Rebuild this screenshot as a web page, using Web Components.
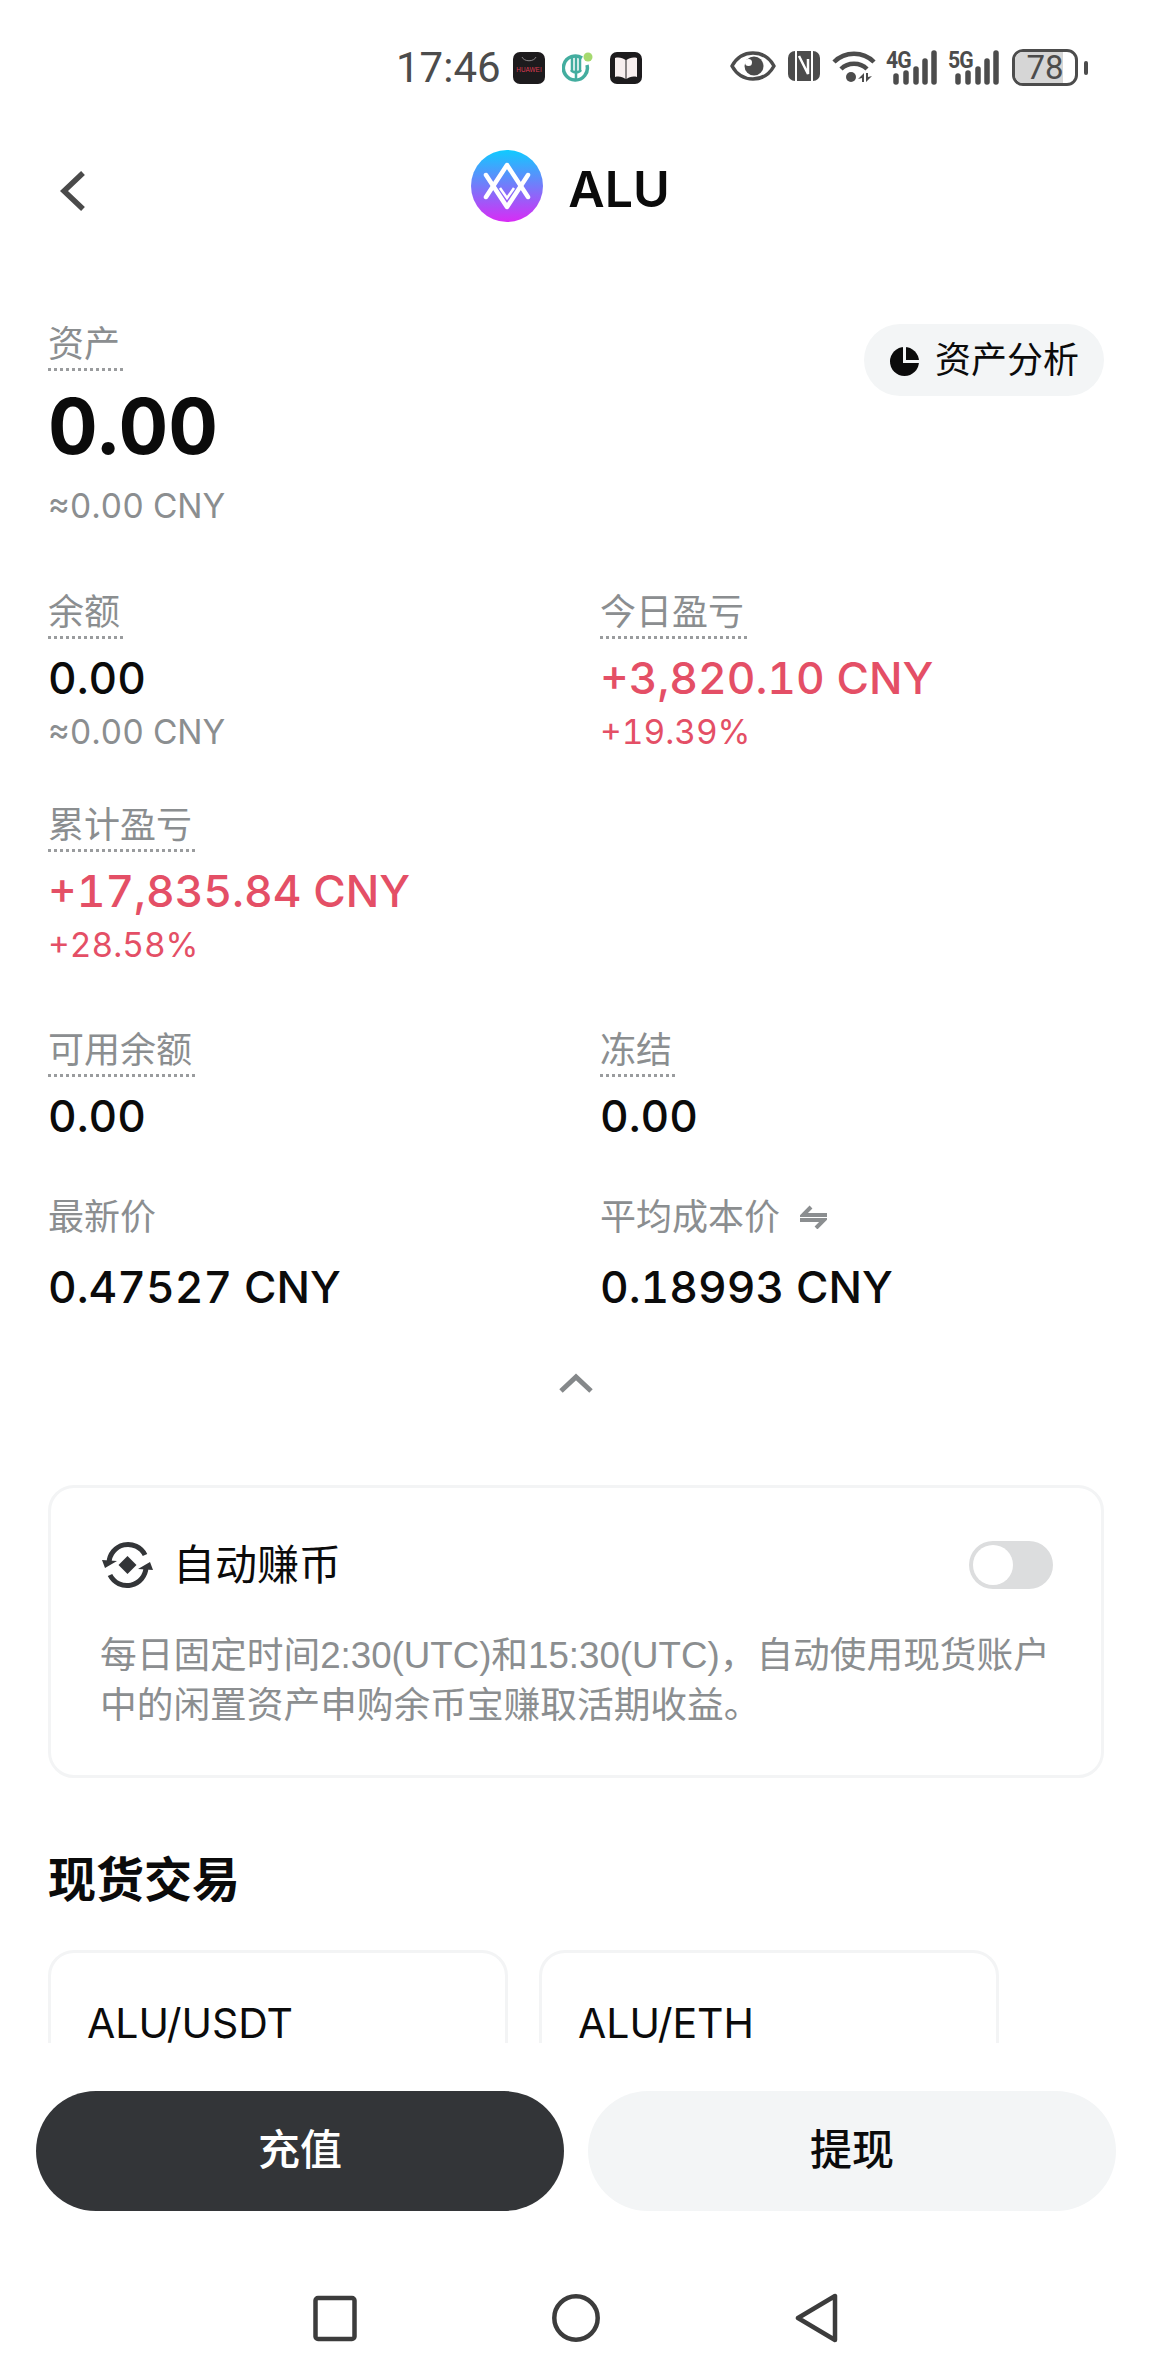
<!DOCTYPE html>
<html lang="zh-CN">
<head>
<meta charset="UTF-8">
<title>ALU</title>
<style>
    html, body { margin: 0; padding: 0; background: #fff; }
    body { width: 1152px; height: 2376px; overflow: hidden; font-family: Inter, "Noto Sans CJK SC", sans-serif; color: #0b0b0b; }
</style>
</head>
<body>

<template id="status-tpl">
    <style>
        :host { display: flex; justify-content: space-between; align-items: flex-start; height: 130px; box-sizing: border-box; padding: 49px 64px 0 396px; color: #4c4c4c; }
        .left, .right { display: flex; align-items: center; height: 37px; }
        .time { font: 400 42px/37px Roboto, sans-serif; width: 117px; }
        svg { display: block; flex: none; }
        .left svg + svg { margin-left: 17px; }
        .right > * + * { margin-left: 12px; }
        .net { position: relative; width: 50px; height: 37px; }
        .net b { position: absolute; left: -2px; top: 2px; font: 700 23px/20px Roboto, sans-serif; letter-spacing: -1px; transform: scaleX(.92); transform-origin: 0 0; }
        .net svg { position: absolute; left: 0; top: 0; }
        .batt { position: relative; display: flex; align-items: center; justify-content: center; width: 66px; height: 37px; box-sizing: border-box; border: 3px solid #4c4c4c; border-radius: 11px; font: 400 33px/31px Roboto, sans-serif; }
        .batt i { position: absolute; left: 0; top: 0; bottom: 0; width: 48px; border-radius: 8px 0 0 8px; background: #d6d6d6; }
        .batt span { position: relative; }
        .tip { width: 4px; height: 14px; border-radius: 2px; background: #4c4c4c; margin-left: 6px !important; }
    </style>
    <div class="left">
        <div class="time">17:46</div>
        <svg width="32" height="32" viewBox="0 0 32 32" style="margin-left:0">
            <rect width="32" height="32" rx="7" fill="#1d1b1d"/>
            <path d="M9 5c2 5 12 5 14 0" fill="none" stroke="#8b8688" stroke-width="1"/>
            <text x="16" y="20" text-anchor="middle" font-family="Liberation Sans" font-size="6.4" fill="#d93a50">HUAWEI</text>
        </svg>
        <svg width="31" height="31" viewBox="0 0 31 31">
            <path d="M20 6A12 12 0 1 0 25 13" fill="none" stroke="#43ad9f" stroke-width="3.5"/>
            <path d="M10 6v12M14 4v24M18 6v12M9 18c2 3 8 3 10 0" fill="none" stroke="#43ad9f" stroke-width="2.5"/>
            <circle cx="26" cy="5" r="4.5" fill="#a5d96f"/>
        </svg>
        <svg width="32" height="32" viewBox="0 0 32 32">
            <rect width="32" height="32" rx="7" fill="#1d1b1d"/>
            <path d="M5 6c4-1 8 0 10.500 2v19C13 25 9 24 5 25zM27 6c-4-1-8 0-10.500 2v19c2.500-2 6.500-3 10.500-2z" fill="#f7eeee"/>
        </svg>
    </div>
    <div class="right">
        <svg width="46" height="30" viewBox="0 0 46 30" style="margin-top:-3px">
            <path d="M2 15C7 6 14 2 23 2s16 4 21 13c-5 9-12 13-21 13S7 24 2 15z" fill="none" stroke="#4c4c4c" stroke-width="3.500" stroke-linejoin="round"/>
            <circle cx="24" cy="15" r="9.500" fill="#4c4c4c"/>
            <circle cx="18.500" cy="11.500" r="3.500" fill="#fff"/>
        </svg>
        <svg width="32" height="30" viewBox="0 0 32 30" style="margin-top:-3px">
            <rect width="32" height="30" rx="7" fill="#4c4c4c"/>
            <path d="M7 0h2v30H7zM23 0h2v30h-2z" fill="#fff"/>
            <path d="M11 5l9 18V8" fill="none" stroke="#fff" stroke-width="2.500"/>
        </svg>
        <svg width="44" height="32" viewBox="0 0 44 32" style="margin-top:-2px">
            <path d="M2 11C13 0 31 0 42 11" fill="none" stroke="#4c4c4c" stroke-width="4.500"/>
            <path d="M9 18C16 11 28 11 35 18" fill="none" stroke="#4c4c4c" stroke-width="4.500"/>
            <circle cx="19" cy="26" r="5" fill="#4c4c4c"/>
            <path d="M32 22v9h-2v-4l-4 1zM34 31v-9h2v4l4 -1z" fill="#4c4c4c"/>
        </svg>
        <div class="net"><b>4G</b><svg width="50" height="37" viewBox="0 0 50 37"><g stroke="#4c4c4c" stroke-width="5.500" stroke-linecap="round"><path d="M8 27v6M18 24v9M28 20v13M37 12v21M46 4v29"/></g></svg></div>
        <div class="net"><b>5G</b><svg width="50" height="37" viewBox="0 0 50 37"><g stroke="#4c4c4c" stroke-width="5.500" stroke-linecap="round"><path d="M8 27v6M18 24v9M28 20v13M37 12v21M46 4v29"/></g></svg></div>
        <div class="batt"><i></i><span>78</span></div>
        <div class="tip"></div>
    </div>
</template>

<template id="head-tpl">
    <style>
        :host { display: grid; grid-template-columns: 1fr auto 1fr; align-items: center; height: 112px; padding: 0 71px 0 60px; }
        svg { display: block; }
        .back { margin-top: 10px; }
        .title { display: flex; align-items: center; gap: 25px; font: 600 50px/60px Inter, sans-serif; color: #0b0b0b; }
        .title span { padding-top: 5px; }
    </style>
    <svg class="back" width="26" height="42" viewBox="0 0 26 42"><path d="M23 3L4 21l19 18" fill="none" stroke="#4a4a4a" stroke-width="5.500"/></svg>
    <div class="title">
        <svg width="72" height="72" viewBox="0 0 72 72">
            <defs><linearGradient id="alu" x1="0" y1="0" x2="0" y2="1"><stop offset="0" stop-color="#0fcbff"/><stop offset="1" stop-color="#d92bf5"/></linearGradient></defs>
            <circle cx="36" cy="36" r="36" fill="url(#alu)"/>
            <g fill="none" stroke="#fff" stroke-width="4.500" stroke-linecap="round" stroke-linejoin="round">
                <path d="M15 47L36 15l21 32"/>
                <path d="M15 25l21 32 21-32"/>
            </g>
            <path d="M29 38l7 10 7-10" fill="none" stroke="#fff" stroke-width="2.500"/>
        </svg>
        <span><slot></slot></span>
    </div>
    <span></span>
</template>

<template id="pill-tpl">
    <style>
        :host { display: inline-flex; align-items: center; gap: 16px; height: 72px; padding: 0 25px 6px 26px; border-radius: 36px; background: #f3f5f6; font-size: 36px; color: #0b0b0b; box-sizing: border-box; }
        svg { display: block; margin-top: 9px; }
    </style>
    <svg width="29" height="29" viewBox="0 0 29 29">
        <circle cx="14.500" cy="14.500" r="14.500" fill="#0b0b0b"/>
        <path d="M14.500 0v14.500H29" fill="none" stroke="#f3f5f6" stroke-width="3"/>
    </svg>
    <slot></slot>
</template>

<template id="stat-tpl">
    <style>
        :host { display: block; color: #8b8e90; }
        .label { display: block; height: 48px; font-size: 36px; line-height: 44px; white-space: nowrap; }
        .label span { display: inline-flex; align-items: center; gap: 20px; height: 51px; padding: 0 3px 4px 0; box-sizing: border-box; }
        :host([dotted]) .label span { background: repeating-linear-gradient(90deg, #9a9c9e 0 3px, transparent 3px 6px) left bottom / 100% 3px no-repeat; }
        .value { display: block; margin-top: 15px; font-size: 44.3px; font-weight: 500; line-height: 54px; color: #0b0b0b; white-space: nowrap; font-variant-numeric: tabular-nums; }
        .sub { display: block; margin-top: 5px; font-size: 33.5px; line-height: 44px; white-space: nowrap; font-variant-numeric: tabular-nums; }
        :host([plain]) .value { margin-top: 19px; }
        :host([tone="up"]) .value { color: #e44f66; }
        :host([tone="up"]) .sub { color: #e44f66; }
        :host([big]) .value { margin-top: 14px; font-size: 77px; font-weight: 700; line-height: 88px; }
        :host([big]) .sub { margin-top: 14px; }
    </style>
    <div class="label"><span><slot></slot></span></div>
    <div class="value"><slot name="value"></slot></div>
    <div class="sub"><slot name="sub"></slot></div>
</template>

<template id="switch-tpl">
    <style>
        :host { display: block; width: 84px; height: 48px; border-radius: 24px; background: #dcddde; position: relative; }
        i { position: absolute; left: 4px; top: 4px; width: 40px; height: 40px; border-radius: 50%; background: #fff; }
    </style>
    <i></i>
</template>

<template id="earn-tpl">
    <style>
        :host { display: block; box-sizing: border-box; height: 293px; border: 3px solid #f3f4f5; border-radius: 26px; padding: 52px 48px 0 51px; }
        .row { display: flex; align-items: center; height: 50px; }
        .row svg { display: block; margin-right: 20px; }
        .name { flex: 1; font-size: 42px; font-weight: 400; color: #0b0b0b; line-height: 50px; }
        .desc { margin: 41px -6px 0 -2px; font-family: "Liberation Sans", "Noto Sans CJK SC", sans-serif; font-size: 36.7px; line-height: 50px; color: #8b8e90; }
    </style>
    <div class="row">
        <svg width="51" height="48" viewBox="0 0 51 48">
            <g fill="none" stroke="#333538" stroke-width="5">
                <path d="M7 22A19 19 0 0 1 43 14"/>
                <path d="M44 26A19 19 0 0 1 8 34"/>
            </g>
            <path d="M0 19L15 20 3 27zM51 29L36 28 48 21z" fill="#333538"/>
            <path d="M25.500 15l9 9-9 9-9-9z" fill="#333538"/>
        </svg>
        <div class="name"><slot name="name"></slot></div>
        <toggle-switch></toggle-switch>
    </div>
    <div class="desc"><slot></slot></div>
</template>

<template id="pair-tpl">
    <style>
        :host { display: block; flex: none; box-sizing: border-box; width: 460px; height: 300px; border: 3px solid #f3f4f5; border-radius: 26px; padding: 47px 36px 0; font-size: 41px; line-height: 46px; font-weight: 400; color: #0b0b0b; }
    </style>
    <slot></slot>
</template>

<template id="actions-tpl">
    <style>
        :host { display: flex; gap: 24px; padding: 48px 36px 0; }
        ::slotted(action-button) { flex: 1; }
    </style>
    <slot></slot>
</template>

<template id="button-tpl">
    <style>
        :host { display: flex; align-items: center; justify-content: center; box-sizing: border-box; height: 120px; padding-bottom: 9px; border-radius: 60px; background: #f3f5f6; color: #0b0b0b; font-size: 42px; font-weight: 500; }
        :host([primary]) { background: #333538; color: #fff; }
    </style>
    <slot></slot>
</template>

<template id="nav-tpl">
    <style>
        :host { display: grid; grid-template-columns: repeat(3, 241px); justify-content: center; justify-items: center; margin-top: 82px; }
        svg { display: block; }
    </style>
    <svg width="44" height="50" viewBox="0 0 44 50"><rect x="2.500" y="5" width="39" height="41" rx="2.500" fill="none" stroke="#3c3c3c" stroke-width="4.500"/></svg>
    <svg width="48" height="50" viewBox="0 0 48 50"><circle cx="24" cy="25" r="21.700" fill="none" stroke="#3c3c3c" stroke-width="4.500"/></svg>
    <svg width="44" height="50" viewBox="0 0 44 50"><path d="M40 3v44L3 25z" fill="none" stroke="#3c3c3c" stroke-width="4.500" stroke-linejoin="round"/></svg>
</template>

<script>
    // same thing for every element: open shadow root, clone its template
    function register(tag, tplId) {
        customElements.define(tag, class extends HTMLElement {
            connectedCallback() {
                if (this.shadowRoot) return;
                this.attachShadow({ mode: 'open' });
                this.shadowRoot.append(document.getElementById(tplId).content.cloneNode(true));
            }
        });
    }

    register('status-bar', 'status-tpl');
    register('top-head', 'head-tpl');
    register('pill-button', 'pill-tpl');
    register('stat-cell', 'stat-tpl');
    register('toggle-switch', 'switch-tpl');
    register('earn-card', 'earn-tpl');
    register('pair-card', 'pair-tpl');
    register('action-bar', 'actions-tpl');
    register('action-button', 'button-tpl');
    register('nav-keys', 'nav-tpl');

    customElements.define('asset-page', class extends HTMLElement {
        connectedCallback() {
            this.attachShadow({ mode: 'open' });
            this.shadowRoot.innerHTML = `
                <style>
                    :host { display: flex; flex-direction: column; height: 2376px; }
                    .scroll { height: 1801px; overflow: hidden; flex: none; padding: 78px 48px 0; box-sizing: border-box; }
                </style>
                <slot name="top"></slot>
                <div class="scroll"><slot></slot></div>
                <slot name="bottom"></slot>`;
        }
    });

    customElements.define('stat-grid', class extends HTMLElement {
        connectedCallback() {
            this.attachShadow({ mode: 'open' });
            this.shadowRoot.innerHTML = `
                <style>:host { display: grid; grid-template-columns: 552px 504px; row-gap: var(--gap, 47px); }</style>
                <slot></slot>`;
        }
    });

    customElements.define('section-title', class extends HTMLElement {
        connectedCallback() {
            this.attachShadow({ mode: 'open' });
            this.shadowRoot.innerHTML = `
                <style>:host { display: block; margin: 70px 0 38px; font-size: 48px; font-weight: 600; line-height: 64px; color: #0b0b0b; }</style>
                <slot></slot>`;
        }
    });

    customElements.define('summary-head', class extends HTMLElement {
        connectedCallback() {
            this.attachShadow({ mode: 'open' });
            this.shadowRoot.innerHTML = `
                <style>
                    :host { display: flex; justify-content: space-between; align-items: flex-start; margin-bottom: 60px; }
                    ::slotted(pill-button) { margin-top: 4px; }
                </style>
                <slot></slot>`;
        }
    });

    customElements.define('fold-arrow', class extends HTMLElement {
        connectedCallback() {
            this.attachShadow({ mode: 'open' });
            this.shadowRoot.innerHTML = `
                <style>:host { display: flex; justify-content: center; margin: 54px 0 92px; } svg { display: block; }</style>
                <svg width="36" height="20" viewBox="0 0 36 20"><path d="M3 18L18 4l15 14" fill="none" stroke="#85888a" stroke-width="5"/></svg>`;
        }
    });

    customElements.define('pair-row', class extends HTMLElement {
        connectedCallback() {
            this.attachShadow({ mode: 'open' });
            this.shadowRoot.innerHTML = `
                <style>:host { display: flex; gap: 31px; }</style>
                <slot></slot>`;
        }
    });
</script>

<asset-page>
    <status-bar slot="top"></status-bar>
    <top-head slot="top">ALU</top-head>

    <summary-head>
        <stat-cell dotted big>
            资产
            <span slot="value">0.00</span>
            <span slot="sub">≈0.00 CNY</span>
        </stat-cell>
        <pill-button>资产分析</pill-button>
    </summary-head>

    <stat-grid>
        <stat-cell dotted>余额<span slot="value">0.00</span><span slot="sub">≈0.00 CNY</span></stat-cell>
        <stat-cell dotted tone="up">今日盈亏<span slot="value">+3,820.10 CNY</span><span slot="sub">+19.39%</span></stat-cell>
        <stat-cell dotted tone="up">累计盈亏<span slot="value">+17,835.84 CNY</span><span slot="sub">+28.58%</span></stat-cell>
    </stat-grid>

    <stat-grid style="--gap:45px;margin-top:59px">
        <stat-cell dotted>可用余额<span slot="value">0.00</span></stat-cell>
        <stat-cell dotted>冻结<span slot="value">0.00</span></stat-cell>
        <stat-cell plain>最新价<span slot="value">0.47527 CNY</span></stat-cell>
        <stat-cell plain>平均成本价<svg width="27" height="24" viewBox="0 0 27 24"><path d="M27 10H3L11 2M0 15h24l-8 8" fill="none" stroke="#8b8e90" stroke-width="4"/></svg><span slot="value">0.18993 CNY</span></stat-cell>
    </stat-grid>

    <fold-arrow></fold-arrow>

    <earn-card>
        <span slot="name">自动赚币</span>
        每日固定时间2:30(UTC)和15:30(UTC)，自动使用现货账户中的闲置资产申购余币宝赚取活期收益。
    </earn-card>

    <section-title>现货交易</section-title>

    <pair-row>
        <pair-card>ALU/USDT</pair-card>
        <pair-card>ALU/ETH</pair-card>
    </pair-row>

    <action-bar slot="bottom">
        <action-button primary>充值</action-button>
        <action-button>提现</action-button>
    </action-bar>
    <nav-keys slot="bottom"></nav-keys>
</asset-page>

</body>
</html>
